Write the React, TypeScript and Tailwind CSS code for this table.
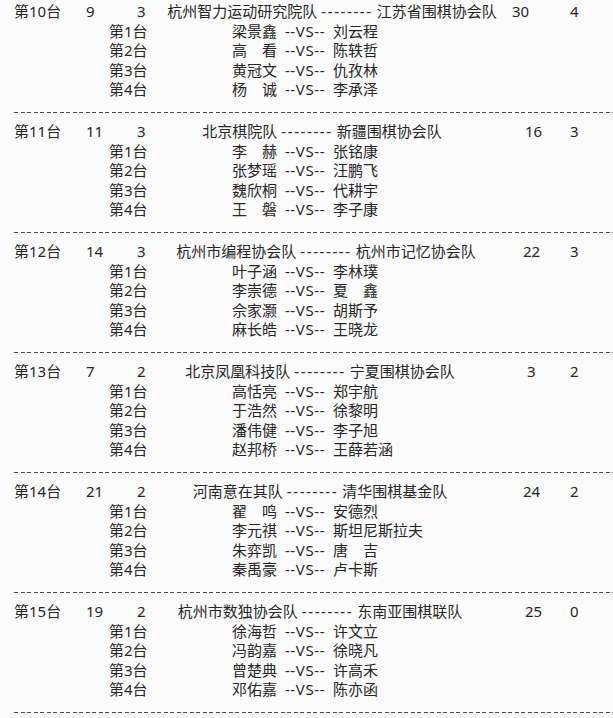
type Block = {
  table: string
  a: string
  b: string
  t1: string
  t2: string
  s1: string
  s2: string
  shift: string
  scoreShift: string
  games: [string, string][]
}

const blocks: Block[] = [
  {
    table: "第10台", a: "9", b: "3", t1: "杭州智力运动研究院队", t2: "江苏省围棋协会队", s1: "30", s2: "4",
    shift: "pl-[24px]", scoreShift: "ml-[-11px]",
    games: [["梁景鑫", "刘云程"], ["高　看", "陈轶哲"], ["黄冠文", "仇孜林"], ["杨　诚", "李承泽"]],
  },
  {
    table: "第11台", a: "11", b: "3", t1: "北京棋院队", t2: "新疆围棋协会队", s1: "16", s2: "3",
    shift: "pl-[4px]", scoreShift: "ml-[2px]",
    games: [["李　赫", "张铭康"], ["张梦瑶", "汪鹏飞"], ["魏欣桐", "代耕宇"], ["王　磐", "李子康"]],
  },
  {
    table: "第12台", a: "14", b: "3", t1: "杭州市编程协会队", t2: "杭州市记忆协会队", s1: "22", s2: "3",
    shift: "pl-[12px]", scoreShift: "ml-[0px]",
    games: [["叶子涵", "李林璞"], ["李崇德", "夏　鑫"], ["佘家灏", "胡斯予"], ["麻长皓", "王晓龙"]],
  },
  {
    table: "第13台", a: "7", b: "2", t1: "北京凤凰科技队", t2: "宁夏围棋协会队", s1: "3", s2: "2",
    shift: "pl-[0px]", scoreShift: "ml-[4px]",
    games: [["高恬亮", "郑宇航"], ["于浩然", "徐黎明"], ["潘伟健", "李子旭"], ["赵邦桥", "王薛若涵"]],
  },
  {
    table: "第14台", a: "21", b: "2", t1: "河南意在其队", t2: "清华围棋基金队", s1: "24", s2: "2",
    shift: "pl-[0px]", scoreShift: "ml-[0px]",
    games: [["翟　鸣", "安德烈"], ["李元祺", "斯坦尼斯拉夫"], ["朱弈凯", "唐　吉"], ["秦禹豪", "卢卡斯"]],
  },
  {
    table: "第15台", a: "19", b: "2", t1: "杭州市数独协会队", t2: "东南亚围棋联队", s1: "25", s2: "0",
    shift: "pl-[0px]", scoreShift: "ml-[2px]",
    games: [["徐海哲", "许文立"], ["冯韵嘉", "徐晓凡"], ["曾楚典", "许高禾"], ["邓佑嘉", "陈亦函"]],
  },
]

function Divider() {
  return (
    <div className="mt-[12px] mb-[9.5px] h-px w-full bg-[image:repeating-linear-gradient(to_right,#4a4a4a_0_4px,transparent_4px_6.5px)]" />
  )
}

function MatchBlock({ block }: { block: Block }) {
  return (
    <div>
      <div className="flex h-[19.5px] items-center whitespace-nowrap">
        <span className="w-[72px]">{block.table}</span>
        <span className="w-[51px]">{block.a}</span>
        <span className="w-[13px]">{block.b}</span>
        <div className={`flex w-[340px] justify-center ${block.shift}`}>
          <span>{block.t1}</span>
          <span className="mx-[4px] tracking-[1.6px]">--------</span>
          <span>{block.t2}</span>
        </div>
        <span className="w-[33px]" />
        <span className="w-[47px]">
          <span className={`inline-block ${block.scoreShift}`}>{block.s1}</span>
        </span>
        <span>{block.s2}</span>
      </div>
      {block.games.map((g, i) => (
        <div key={i} className="flex h-[19.5px] items-center whitespace-nowrap pl-[95px]">
          <span className="w-[60px]">第{i + 1}台</span>
          <span className="w-[108px] text-right">{g[0]}</span>
          <span className="w-[56px] text-center tracking-[0.6px]">--VS--</span>
          <span>{g[1]}</span>
        </div>
      ))}
      <Divider />
    </div>
  )
}

export default function App() {
  return (
    <div
      className="min-h-screen w-[613px] overflow-hidden bg-[#fbfbfb] pl-[14px] pt-[2px] text-[15px] leading-[19.5px] text-[#262626]"
      style={{ fontFamily: '"Noto Sans", "Noto Sans CJK SC", sans-serif' }}
    >
      {blocks.map((b) => (
        <MatchBlock key={b.table} block={b} />
      ))}
    </div>
  )
}
